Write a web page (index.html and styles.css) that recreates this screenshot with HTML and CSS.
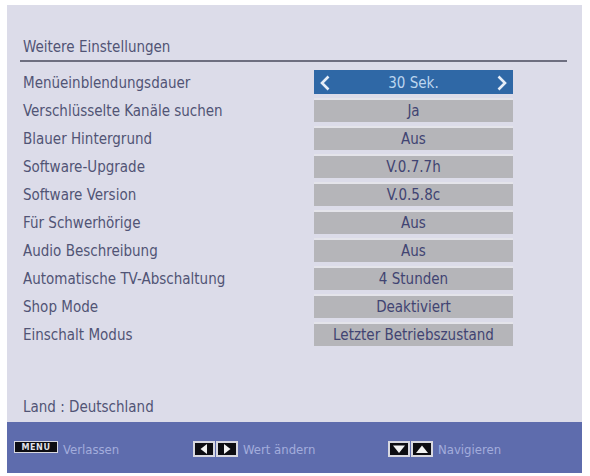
FILE: index.html
```html
<!DOCTYPE html>
<html lang="de">
<head>
<meta charset="utf-8">
<title>Weitere Einstellungen</title>
<link rel="stylesheet" href="styles.css">
</head>
<body>
<div class="panel">
  <div class="header">
    <div class="title">Weitere Einstellungen</div>
    <div class="rule"></div>
  </div>
  <div class="rows">
    <div class="row"><div class="label">Menüeinblendungsdauer</div>
      <div class="value selected">
        <svg class="chev" width="12" height="16" viewBox="0 0 12 16"><polyline points="9.5,1.5 3,8 9.5,14.5" fill="none" stroke="#e6eef8" stroke-width="2.6"/></svg>
        <span>30 Sek.</span>
        <svg class="chev" width="12" height="16" viewBox="0 0 12 16"><polyline points="2.5,1.5 9,8 2.5,14.5" fill="none" stroke="#e6eef8" stroke-width="2.6"/></svg>
      </div></div>
    <div class="row"><div class="label">Verschlüsselte Kanäle suchen</div><div class="value">Ja</div></div>
    <div class="row"><div class="label">Blauer Hintergrund</div><div class="value">Aus</div></div>
    <div class="row"><div class="label">Software-Upgrade</div><div class="value">V.0.7.7h</div></div>
    <div class="row"><div class="label">Software Version</div><div class="value">V.0.5.8c</div></div>
    <div class="row"><div class="label">Für Schwerhörige</div><div class="value">Aus</div></div>
    <div class="row"><div class="label">Audio Beschreibung</div><div class="value">Aus</div></div>
    <div class="row"><div class="label">Automatische TV-Abschaltung</div><div class="value">4 Stunden</div></div>
    <div class="row"><div class="label">Shop Mode</div><div class="value">Deaktiviert</div></div>
    <div class="row"><div class="label">Einschalt Modus</div><div class="value">Letzter Betriebszustand</div></div>
  </div>
  <div class="spacer"></div>
  <div class="land">Land : Deutschland</div>
  <div class="bar">
    <div class="hint hint-menu"><span class="key key-menu">MENU</span><span class="hint-text">Verlassen</span></div>
    <div class="hint hint-lr">
      <span class="keys">
        <span class="key key-icon"><svg width="18" height="12" viewBox="0 0 18 12"><polygon points="12,1 12,11 5.5,6" fill="#f2f2f2"/></svg></span>
        <span class="key key-icon"><svg width="18" height="12" viewBox="0 0 18 12"><polygon points="6,1 6,11 12.5,6" fill="#f2f2f2"/></svg></span>
      </span>
      <span class="hint-text">Wert ändern</span>
    </div>
    <div class="hint hint-ud">
      <span class="keys">
        <span class="key key-icon"><svg width="18" height="12" viewBox="0 0 18 12"><polygon points="3,2.5 15,2.5 9,10" fill="#f2f2f2"/></svg></span>
        <span class="key key-icon"><svg width="18" height="12" viewBox="0 0 18 12"><polygon points="3,10 15,10 9,2.5" fill="#f2f2f2"/></svg></span>
      </span>
      <span class="hint-text">Navigieren</span>
    </div>
  </div>
</div>
</body>
</html>
```
FILE: styles.css
```css
html, body {
  margin: 0;
  padding: 0;
  background: #ffffff;
}
body {
  width: 590px;
  height: 476px;
  overflow: hidden;
  font-family: "DejaVu Sans Condensed", "DejaVu Sans", sans-serif;
  font-stretch: condensed;
}
.panel {
  margin: 5px 8px 0 7px;
  width: 575px;
  height: 468px;
  background: #dcdce9;
  display: flex;
  flex-direction: column;
  color: #515475;
}
.header {
  padding: 33px 15px 0 13px;
}
.title {
  padding-left: 3px;
  font-size: 15px;
  line-height: 18px;
  height: 18px;
  color: #515475;
}
.rule {
  margin-top: 4px;
  height: 2px;
  background: #6e6f80;
}
.rows {
  margin-top: 8px;
  display: flex;
  flex-direction: column;
  gap: 4px;
}
.row {
  display: flex;
  align-items: center;
  height: 24px;
}
.label {
  width: 307px;
  padding-left: 16px;
  box-sizing: border-box;
  font-size: 15px;
  line-height: 18px;
  padding-top: 2px;
  color: #515475;
}
.value {
  width: 199px;
  height: 24px;
  box-sizing: border-box;
  background: #b5b5b9;
  border-top: 2px solid #e4e4ea;
  display: flex;
  align-items: center;
  justify-content: center;
  font-size: 15px;
  color: #414472;
}
.value.selected {
  background: #2f68a6;
  border-top: 2px solid #2f68a6;
  color: #bcd5ef;
  justify-content: space-between;
  padding: 0 5px 0 5px;
}
.chev {
  display: block;
}
.spacer {
  flex: 1;
}
.land {
  padding-left: 16px;
  font-size: 15px;
  line-height: 18px;
  margin-bottom: 6px;
  color: #515475;
}
.bar {
  height: 51px;
  background: #5e6cad;
  display: flex;
  align-items: center;
}
.hint {
  display: flex;
  align-items: center;
  gap: 5px;
  margin-top: 3px;
}
.hint-menu {
  margin-left: 7px;
  width: 179px;
}
.hint-lr {
  width: 195px;
}
.hint-text {
  font-size: 13px;
  color: #a3addc;
}
.key {
  background: #0d0d12;
  border: 1px solid #d8d8e0;
  box-sizing: border-box;
  display: flex;
  align-items: center;
  justify-content: center;
}
.key-menu {
  width: 44px;
  height: 12px;
  margin-bottom: 4px;
  font-size: 9px;
  font-weight: bold;
  color: #e0e0e8;
  font-family: "DejaVu Sans", sans-serif;
  letter-spacing: 0.5px;
}
.keys {
  display: flex;
  gap: 1px;
}
.key-icon {
  width: 22px;
  height: 16px;
  border-width: 2px;
}
.key-icon svg {
  display: block;
}
```
